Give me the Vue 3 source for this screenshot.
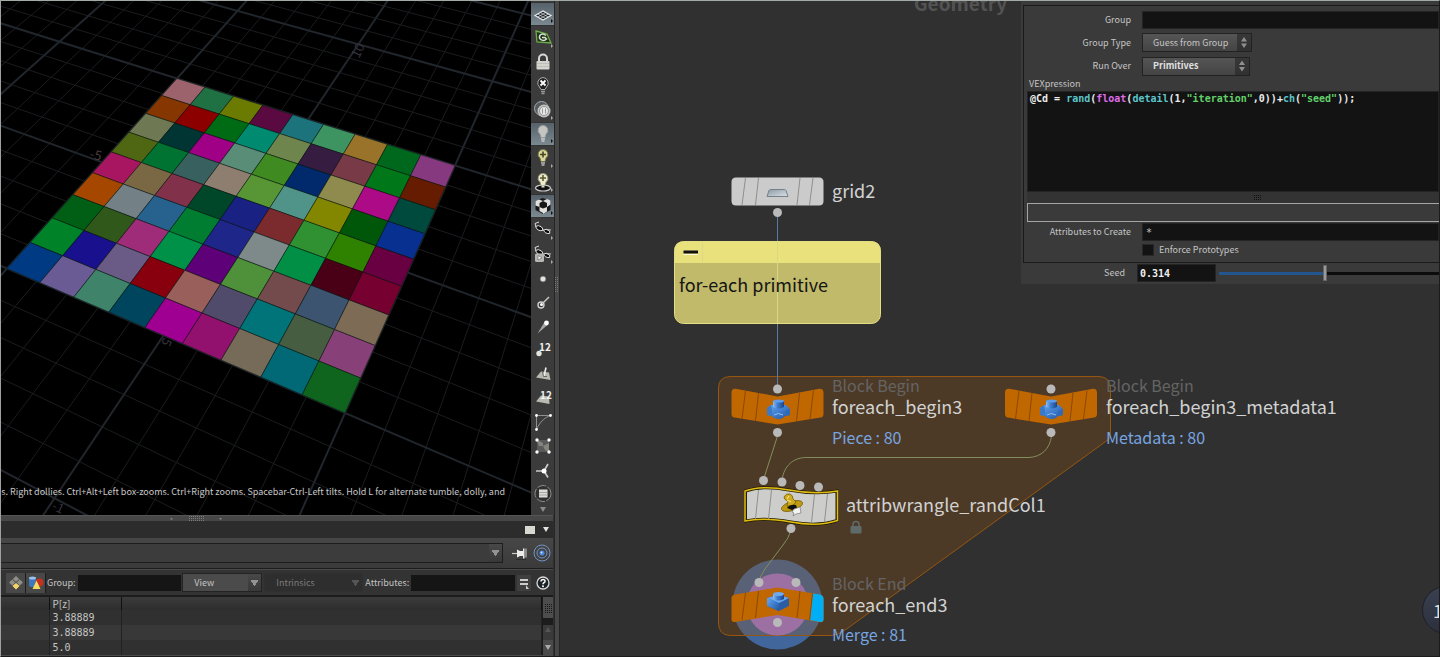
<script setup>
import { ref } from 'vue'

// Projective mapping of the unit square onto the tilted ground plane.
const A = [176, 77.5]
const B = [454, 164.5]
const C = [344, 412]
const D = [6, 267.5]
const sx = A[0] - B[0] + C[0] - D[0]
const sy = A[1] - B[1] + C[1] - D[1]
const ex = B[0] - C[0]
const ey = B[1] - C[1]
const fx = D[0] - C[0]
const fy = D[1] - C[1]
const det = ex * fy - fx * ey
const g = (sx * fy - fx * sy) / det
const h = (ex * sy - sx * ey) / det

function project(u, v) {
  const w = 1 + g * u + h * v
  const x = ((B[0] - A[0] + g * B[0]) * u + (D[0] - A[0] + h * D[0]) * v + A[0]) / w
  const y = ((B[1] - A[1] + g * B[1]) * u + (D[1] - A[1] + h * D[1]) * v + A[1]) / w
  return x.toFixed(1) + ' ' + y.toFixed(1)
}

const palette = [
  '9c636d 1f7043 6b7a00 5a0a41 1d737b 3e9460 9a732b 00681c 87397f',
  '863600 8c0000 006b15 008a70 6e864d 361c41 783a47 007819 661c00',
  '6e7853 003534 9f0086 5a8d78 408a22 002a6b 8f8a4d ac0a86 00493d',
  '4f6613 007332 38605f 8e7e70 589534 509389 838700 00570a 083090',
  'a81561 7a6844 82314b 00472a 192182 7b2b2d 2f9132 2f8100 690042',
  'a64700 738086 26628d 007d31 1e268a 7e898a 008f45 490017 76002f',
  '005f14 2f581a 9e2c78 009149 5e0077 4f903a 734b4c 3c546f 7d6b55',
  '008328 19108d 6a5b86 88000d 985f5b 504b6b 007479 465d42 884079',
  '003a82 6b5b94 3f836a 00455e 9f0092 92116e 766a58 006975 0f651e'
]
const cells = palette.flatMap((row, j) =>
  row.split(' ').map((color, i) => ({
    fill: '#' + color,
    d: `M${project(i / 9, j / 9)}L${project((i + 1) / 9, j / 9)}L${project((i + 1) / 9, (j + 1) / 9)}L${project(i / 9, (j + 1) / 9)}Z`
  }))
)
let thin = ''
let major = ''
for (let k = -20; k <= 30; k++) {
  const t = k / 10
  const d = `M${project(t, -2)}L${project(t, 2)}` + (k <= 20 ? `M${project(-2, t)}L${project(3, t)}` : '')
  if (k % 5 === 0) major += d
  else thin += d
}

const bulb = 'M11 2.500a4.800 4.800 0 0 0-3 8.600l1 3.400h4l1-3.400a4.800 4.800 0 0 0-3-8.600z'
const glasses = '<path d="M3 4.500l4-1.500M3 4.500l1 3" stroke="#ddd" fill="none"/><path d="M3.500 7.500q3-2 6 .5 2 2 1 3.500-5 1-7-4z" fill="#0d0d0d" stroke="#e8e8e8"/><path d="M11.500 11q3-1.500 5.500.5 1.500 1.500.5 3-4.500.5-6-3.500z" fill="#0d0d0d" stroke="#e8e8e8"/><path d="M10 10l2 1.500M14 10.500l5 .5" stroke="#ccc"/>'
const tools = [
  { name: 'Reference grid', on: true, more: true, art: '<path d="M3 12.500L11 8l8 4.500-8 4.500z" fill="#20262a" stroke="#e4e8ea" stroke-width="1.200"/><path d="M5.700 11l8 4.500M8.300 9.500l8 4.500M5.700 14l8-4.500M8.300 15.500l8-4.500" stroke="#d4d8da" stroke-width=".7"/>' },
  { name: 'Construction plane', more: true, art: '<path d="M4 4l11 3 4 9-14-1z" fill="#20301a" stroke="#6fae4e" stroke-width="1.300"/><path d="M14 8.500c-4-3-7-1-6.500 2.500 1 3 5 3 7 1l-1.500-1.500H10" stroke="#d8e2d2" stroke-width="1.500" fill="none"/>' },
  { name: 'Lock camera', art: '<path d="M7 11V7.500a4 4 0 0 1 8 0V11" stroke="#d8d8d2" stroke-width="2" fill="none"/><rect x="4.500" y="10" width="13" height="8.500" rx="1" fill="#d4d4ce"/><path d="M5 12.500h12M5 15.500h12" stroke="#b5b5b0" stroke-width=".7"/>' },
  { name: 'Disable lighting', art: '<path d="M11 2.500a5.500 5.500 0 0 0-3.500 9.500l1.500 2.500h4l1.500-2.500A5.500 5.500 0 0 0 11 2.500z" fill="#222" stroke="#a9adac"/><path d="M8.500 5.500l5 5M13.500 5.500l-5 5" stroke="#fff" stroke-width="1.800"/><path d="M9 16.500h4M9.500 18.500h3" stroke="#999" stroke-width="1.300"/>' },
  { name: 'Headlight', more: true, art: '<circle cx="9.500" cy="9.500" r="7" fill="#55595b" stroke="#a8acb0"/><circle cx="12" cy="12" r="6.500" fill="#c2c4c2"/><circle cx="12" cy="12" r="4.500" fill="#e6e6e6" stroke="#8f9394"/><path d="M10.500 9.500v5M13.500 9.500v5" stroke="#999"/>' },
  { name: 'Normal lighting', on: true, more: true, art: `<path d="${bulb}" fill="#c4c5c0" stroke="#9a9d9c"/><path d="M9 16h4M9.500 18h3" stroke="#c9cccc" stroke-width="1.400"/>` },
  { name: 'High quality lighting', more: true, art: `<path d="${bulb}" fill="#d8d996" stroke="#77784f"/><path d="M11 4.500v6M8 7.500h6" stroke="#44442a" stroke-width="1.600"/><path d="M9 16h4M9.500 18h3" stroke="#bbb" stroke-width="1.400"/>` },
  { name: 'Lighting with shadows', more: true, art: `<ellipse cx="11" cy="17" rx="7.500" ry="3" fill="#111" stroke="#cfcfcf" stroke-width="1.200"/><path d="${bulb}" fill="#ecebca" stroke="#99997c"/><path d="M11 4v6M8 7h6" stroke="#5a5a35" stroke-width="1.600"/><path d="M9.500 15.500h3" stroke="#ddd" stroke-width="2"/>` },
  { name: 'Materials', on: true, more: true, art: '<path d="M3.500 6l7-3 8 2.500V15L11 19l-7.500-4z" fill="#181818"/><path d="M3.500 6L7 4.500 11 6 7.500 8zM11 6l4-2 3.500 1.500L15 8zM3.500 6l4 2v4l-4-1.500zM7.500 12l3.500 1.500V18l-3.500-2zM15 8l3.500-2.500v4L15 12zM11 13.500l4-1.500v4.500L11 19z" fill="#dfe0de"/>' },
  { name: 'Display options', more: true, art: glasses },
  { name: 'Snapshot', more: true, art: glasses + '<rect x="3" y="10.500" width="9" height="8.500" rx="1.500" fill="#b6b6b2"/><path d="M6 12.500v4.500l4-2.300z" fill="#fff" stroke="#666" stroke-width=".7"/>' },
  { name: 'Points', art: '<circle cx="11" cy="12" r="2.800" fill="#e5e5e0" stroke="#777" stroke-width=".6"/>' },
  { name: 'Point normals', art: '<path d="M9 14l8-8" stroke="#c3c3be" stroke-width="1.600"/><circle cx="9" cy="14" r="3" fill="#333" stroke="#d0d0cc" stroke-width="1.400"/><circle cx="9.500" cy="13.500" r="1.500" fill="#fff"/>' },
  { name: 'Point trails', art: '<path d="M5.500 18.500l7-11.500 3 3z" fill="#a5a5a2"/><circle cx="14.500" cy="8" r="2.400" fill="#fff"/>' },
  { name: 'Point numbers', art: '<text x="7" y="12" class="num">12</text><circle cx="7" cy="14.500" r="2.700" fill="#e3e3de"/>' },
  { name: 'Primitive normals', art: '<path d="M4 14.500l5-6 8 1 1.500 7.500z" fill="#b9b9b4"/><path d="M12 13l2-8.500" stroke="#eee" stroke-width="1.600"/><path d="M10.500 9l1 4.500h3.500" stroke="#666" fill="none"/>' },
  { name: 'Primitive numbers', art: '<path d="M4 14.500l5-6 8 1 .5 7.500z" fill="#b9b9b4"/><text x="8" y="12" class="num">12</text>' },
  { name: 'Primitive hulls', art: '<path d="M4.500 4.500v14M4.500 4.500h14M4.500 18.500C7 12.500 12 6.500 18.500 4.500" stroke="#8f8f8c" fill="none"/><circle cx="4.500" cy="4.500" r="1.400" fill="#fff"/><circle cx="18.500" cy="4.500" r="1.400" fill="#fff"/><circle cx="4.500" cy="18.500" r="1.400" fill="#fff"/>' },
  { name: 'Profiles', art: '<path d="M5 5h12v12H5z" fill="#5a5a5a"/><path d="M5 5l6 3v3H7zM11 11l6-3v9l-4-2z" fill="#85857f"/><g fill="#fff"><circle cx="5" cy="5" r="1.700"/><circle cx="17" cy="5" r="1.700"/><circle cx="5" cy="17" r="1.700"/><circle cx="17" cy="17" r="1.700"/></g>' },
  { name: 'Vector axes', art: '<path d="M12 12H4M12 12l4-7M12 12l4 6.500" stroke="#c9c9c5" stroke-width="1.700"/><circle cx="12" cy="12" r="2.500" fill="#fff"/>' },
  { name: 'Visualizers', art: '<circle cx="11" cy="11.500" r="8" fill="#303030" stroke="#8d8d8a" stroke-dasharray="9 1.500"/><path d="M7 7.500h8.500v8H7z" fill="#ddddd8"/><path d="M7 10.500h8.500M7 13h8.500" stroke="#999" stroke-width=".8"/>' }
]

const rows = ['3.88889', '3.88889', '5.0']
const code = '@Cd = rand(float(detail(1,"iteration",0))+ch("seed"));'
const tokens = [
  ['@Cd = ', 'w'], ['rand', 'f'], ['(', 'w'], ['float', 't'], ['(', 'w'], ['detail', 'f'], ['(1,', 'w'],
  ['"iteration"', 's'], [',0))+', 'w'], ['ch', 'f'], ['(', 'w'], ['"seed"', 's'], ['));', 'w']
]
const vex = ref(code)
const seed = ref('0.314')

const ports = [
  [777.5, 212.5], [777.5, 389], [777.5, 432.5], [1051, 389], [1051, 432.5], [763.5, 480.5], [782, 482],
  [800, 485.5], [818.5, 487], [791, 528.5], [759, 582.5], [796, 582.5], [777.5, 622.5]
]
</script>

<template>
  <div class="desktop">
    <div class="left">
      <section class="scene">
        <div class="view">
          <svg class="world" role="img" aria-label="Perspective view of a coloured grid">
            <path :d="thin" class="thin" />
            <path :d="major" class="major" />
            <g class="axis">
              <text transform="translate(88 157) rotate(14)" class="red">-5</text>
              <text transform="translate(163 336) rotate(115)">5</text>
              <text transform="translate(358 58) rotate(-65)">10</text>
              <text transform="translate(50 508) rotate(25)">-1</text>
            </g>
            <path v-for="(c, i) in cells" :key="i" :d="c.d" :fill="c.fill" class="cell" />
          </svg>
          <p class="hint">ms. Right dollies. Ctrl+Alt+Left box-zooms. Ctrl+Right zooms. Spacebar-Ctrl-Left tilts. Hold L for alternate tumble, dolly, and</p>
        </div>
        <div class="tools">
          <button v-for="t in tools" :key="t.name" type="button" class="tool" :class="{ on: t.on }" :aria-label="t.name">
            <svg viewBox="0 0 22 22" v-html="t.art"></svg>
            <i v-if="t.more" class="more"></i>
          </button>
          <button type="button" class="scroll-more" aria-label="More display options">
            <svg viewBox="0 0 8 6"><path d="M1 0h6L4 5z" fill="#8a8a8a" /></svg>
          </button>
        </div>
      </section>

      <section class="sheet">
        <div class="hsplit">
          <svg viewBox="0 0 54 6">
            <path d="M1 3.500l1.500-2 1.500 2zM50 2h3l-1.500 2z" fill="#888" />
            <path d="M20 .500h16M20 2.500h16M20 4.500h16" stroke="#7a7a7a" stroke-dasharray="1 1" />
          </svg>
        </div>
        <div class="tabs">
          <button type="button" aria-label="Maximize pane"><svg viewBox="0 0 10 9"><path d="M0 1h10v8H0z" fill="#d8d8d2" /></svg></button>
          <button type="button" aria-label="Pane menu" class="caret"><svg viewBox="0 0 6 6"><path d="M0 0h6L3 5z" fill="#e4e4de" /></svg></button>
        </div>
        <div class="pathbar">
          <select class="path" aria-label="Node path"><option></option></select>
          <button type="button" aria-label="Pin">
            <svg viewBox="0 0 18 14"><path d="M1 7.500h6" stroke="#ccc" stroke-width="1.200" /><path d="M6 3.500l3 1.500h3V2.500h1.500v10H12V10H9l-3 1.500z" fill="#ecece8" /><path d="M15 2.500v9" stroke="#bbb" stroke-width="1.200" /><path d="M5 13.500h10" stroke="#222" stroke-width=".6" /></svg>
          </button>
          <button type="button" aria-label="Link" class="link">
            <svg viewBox="0 0 18 18"><g fill="none" stroke="#7394c4"><circle cx="9" cy="9" r="8" /><circle cx="9" cy="9" r="5" /></g><circle cx="9" cy="9" r="2.600" fill="#4b86d8" /><circle cx="8.500" cy="8.500" r="1" fill="#cfe0fb" /></svg>
          </button>
        </div>
        <div class="filters">
          <button type="button" class="sq" aria-label="Points">
            <svg viewBox="0 0 16 16"><path d="M8 1l7 6.500L8 14 1 7.500z" fill="#8f8f88" /><path d="M4.500 4.300l7 6.500M11.500 4.300l-7 6.500" stroke="#3d3d3d" /><path d="M8 8l3.500 3L8 14.500 4.500 11z" fill="#f7d466" /></svg>
          </button>
          <button type="button" class="sq" aria-label="Primitives">
            <svg viewBox="0 0 16 16"><rect x="1" y="2" width="7" height="10" rx="2" fill="#3f77bd" /><ellipse cx="4.500" cy="3" rx="3.500" ry="1.500" fill="#9cc0ea" /><circle cx="11.500" cy="7.500" r="4" fill="#c6301e" /><path d="M8.500 5.500l4 8.500H4.500z" fill="#f3dc62" /></svg>
          </button>
          <label for="grp">Group:</label>
          <input id="grp" type="text" />
          <select class="dd" aria-label="View"><option>View</option></select>
          <select class="dd off" aria-label="Intrinsics" disabled><option>Intrinsics</option></select>
          <label for="attr">Attributes:</label>
          <input id="attr" type="text" />
          <button type="button" class="mini" aria-label="Attribute list">
            <svg viewBox="0 0 12 12"><path d="M2 3h8M2 7h8" stroke="#ccc" stroke-width="2" /><path d="M8 8v4h3z" fill="#ccc" /></svg>
          </button>
          <button type="button" class="help" aria-label="Help">
            <svg viewBox="0 0 14 14"><circle cx="7" cy="7" r="6" fill="#1b2228" stroke="#d8d8d8" stroke-width="1.300" /><path d="M5 5.500c0-3 4.500-2.500 4 0-.300 1.200-2 1.200-2 2.700" stroke="#fff" stroke-width="1.500" fill="none" /><circle cx="7" cy="10.300" r="1" fill="#fff" /></svg>
          </button>
        </div>
        <div class="data">
          <table>
            <thead><tr><th class="c1"></th><th class="c2">P[z]</th><th></th></tr></thead>
            <tbody>
              <tr v-for="(r, i) in rows" :key="i"><td></td><td>{{ r }}</td><td></td></tr>
            </tbody>
          </table>
          <div class="bar">
            <svg class="grip" viewBox="0 0 8 10"><path d="M1.500 1v9M3.500 1v9M5.500 1v9M7.500 1v9" stroke="#151515" stroke-dasharray="1 1" /></svg>
            <svg viewBox="0 0 6 5"><path d="M0 5h6L3 0z" fill="#555" /></svg>
            <svg viewBox="0 0 6 5"><path d="M0 0h6L3 5z" fill="#aaa" /></svg>
          </div>
        </div>
      </section>
    </div>

    <div class="vsplit">
      <svg viewBox="0 0 4 20"><path d="M.500 0v16M2.500 0v16" stroke="#777" stroke-dasharray="1 1" /></svg>
    </div>

    <section class="network">
      <svg class="graph" role="group" aria-label="Network editor">
        <defs>
          <linearGradient id="brickFront" x1="0" y1="0" x2="1" y2="1"><stop offset="0" stop-color="#6ba5ec" /><stop offset=".5" stop-color="#3f7fd0" /><stop offset="1" stop-color="#245397" /></linearGradient>
          <linearGradient id="stud" x1="0" y1="0" x2="1" y2="0"><stop offset="0" stop-color="#8fbcf3" /><stop offset=".4" stop-color="#3f7fd0" /><stop offset="1" stop-color="#1c458a" /></linearGradient>
          <linearGradient id="plate" x1="0" y1="0" x2="1" y2="1"><stop offset="0" stop-color="#8b98a3" /><stop offset="1" stop-color="#dce2e6" /></linearGradient>
          <g id="bent">
            <path d="M-46-11.500q0-4 4-3.800L0-7.500l42-7.800q4-.200 4 3.800V10q0 3-3 3.600L0 20.500-43 13.600q-3-.600-3-3.600z" fill="#c16700" />
            <path d="M-32-13.500l-3.500 28.500M-19-11l-3 28M22-11l-3 28M36-13.500l-3.500 28.500" stroke="#8a4a06" />
          </g>
          <g id="brick">
            <path d="M-11-1l4-3H8l4 4v6L7 7 5 9q-4 2-9 0l-2-2-5-1z" fill="url(#brickFront)" />
            <path d="M-11-1l4-3 1 6v5l-5-1z" fill="#3a78c8" />
            <path d="M7 2l5-2v6L7 7z" fill="#2f69b8" />
            <path d="M-4 6q4-3 9 0" fill="none" stroke="#8fbdf5" />
            <path d="M-5-8H6v6q-5 3-11 0z" fill="url(#stud)" />
            <ellipse cx=".5" cy="-8" rx="5.500" ry="1.500" fill="#5f9be6" />
          </g>
          <g id="brickEnd">
            <path d="M-11-4L0-7l11 3v8L1 9-11 4z" fill="#2a5da6" />
            <path d="M-11-4L0-7l11 3L1 1z" fill="#6aa6ee" />
            <path d="M-11-4L1 1v8l-12-5z" fill="url(#brickFront)" />
            <path d="M-5-8H6v5Q.5 0-5-3z" fill="url(#stud)" />
            <ellipse cx=".5" cy="-8" rx="5.500" ry="2" fill="#6fa8ef" />
          </g>
        </defs>
        <g transform="translate(-560 -1)">
          <text x="914" y="11" class="title">Geometry</text>
          <circle cx="777.500" cy="604.500" r="45" fill="#41669c" />
          <path class="block" d="M730 376.500H1099Q1110.500 377 1110.500 389V438L848 628Q838 635.500 830 635.500H730Q718.500 635 718.500 623V388Q718.500 377 730 376.500Z" />
          <circle cx="777.500" cy="604.500" r="31" fill="#9c70a3" />

          <path class="wire dep" d="M777.500 212V388" />
          <g class="wire">
            <path d="M777.500 436L764 478" />
            <path d="M1051.500 436C1050 449 1041 457 1029 457.500H808C793 457 784 466 782 480" />
            <path d="M791 530Q789 538 783 545L765 569Q760 576 759 582" />
          </g>

          <path d="M736 177.500H819Q823.500 177.500 823.500 182V201Q823.500 205.500 819 205.500H736Q731.500 205.500 731.500 201V182Q731.500 177.500 736 177.500Z" fill="#cbcbcb" />
          <path d="M745.500 178l-3.500 27M758.500 178l-3 27M800 178l-3 27M813 178l-3.500 27" stroke="#8f8f8f" />
          <path d="M770.500 189.500h14q1 0 1.500 1l2 6h-21l2-6q.500-1 1.500-1z" fill="url(#plate)" stroke="#74818b" />
          <text x="832" y="198" class="name">grid2</text>

          <rect x="674.500" y="241.500" width="206" height="82" rx="9" fill="#c0ba6a" />
          <path d="M674.500 263V250.500q0-9 9-9h188q9 0 9 9V263z" fill="#e9e17c" />
          <rect x="674.500" y="241.500" width="206" height="82" rx="9" fill="none" stroke="#e4dd82" />
          <path d="M702.500 243v19M777.500 242v81" stroke="#dbd68a" />
          <path d="M683.500 254.500h14.500" stroke="#fffbd8" /><path d="M683.500 252h14.500" stroke="#111" stroke-width="3" />
          <text x="679" y="292" class="note">for-each primitive</text>

          <use href="#bent" x="777.500" y="404" /><use href="#brick" x="778" y="409" />
          <use href="#bent" x="1051" y="404" /><use href="#brick" x="1051" y="409" />

          <path d="M745.500 491Q762 485 789 490T837 491V520.500Q818 527 791 522T745.500 521Z" fill="#cdcdcb" stroke="#231d05" stroke-width="3" />
          <path d="M745 491Q762 485 789 490T837.500 491V520.500Q818 527 791 522T745 521Z" fill="none" stroke="#e0bd10" stroke-width="1.500" />
          <path d="M758.500 490l-3 29M771.500 490l-3 29M814.500 494l-3 29M827.500 494l-3 28" stroke="#8f8f8f" />
          <ellipse cx="792" cy="506" rx="11" ry="4.500" transform="rotate(-18 792 506)" fill="#bf9a12" stroke="#75600c" stroke-width=".8" />
          <path d="M784 497q2-4 6-3 3 1 3 5l3 3q-3 5-9 4l1-5q-4-1-4-4z" fill="#ceab1c" stroke="#75600c" stroke-width=".8" />
          <path d="M787 500l4 2M789 496l-2 3" stroke="#f4e07a" stroke-width="1.200" />
          <path d="M787 508q3-4 9-3l1 3-5 2z" fill="#111" />
          <path d="M794 509l6-2 1 6-5 1-3 2 1-3-2-1z" fill="#f4f4f2" stroke="#777" stroke-width=".7" />

          <path d="M735 594.500L777.500 587.500 820 594.500Q823.500 595.500 823.500 599V619Q823.500 623 819.500 622L777.500 615 735 622Q731.500 622.500 731.500 619V598Q731.500 595 735 594.500Z" fill="#c16700" />
          <path d="M813 593.500l7 1q3.500 1 3.500 4.500v20q0 3.500-3.500 3l-10-2z" fill="#00aef5" />
          <path d="M745.500 593l-3.500 27M758.500 591l-3 27M800 591l-3 27M812.500 593.500l-3 27" stroke="#8a4a06" />
          <use href="#brickEnd" x="778" y="602" />

          <g fill="#b9b9b9">
            <circle v-for="p in ports" :key="p.join()" :cx="p[0]" :cy="p[1]" r="4.500" />
          </g>

          <g fill="#5f6a6a"><rect x="850.500" y="526" width="11" height="7.500" rx="1" /><path d="M853 527v-2.500a3 3 0 0 1 6 0V527" fill="none" stroke="#5f6a6a" stroke-width="1.500" /></g>

          <text x="832" y="392" class="kind">Block Begin</text>
          <text x="832" y="414" class="name">foreach_begin3</text>
          <text x="832" y="444" class="info">Piece : 80</text>
          <text x="1106" y="392" class="kind">Block Begin</text>
          <text x="1106" y="414" class="name">foreach_begin3_metadata1</text>
          <text x="1106" y="444" class="info">Metadata : 80</text>
          <text x="846" y="512" class="name">attribwrangle_randCol1</text>
          <text x="832" y="590" class="kind">Block End</text>
          <text x="832" y="612" class="name">foreach_end3</text>
          <text x="832" y="641" class="info">Merge : 81</text>
        </g>
      </svg>

      <button type="button" class="badge">1</button>

      <form class="params" @submit.prevent>
        <div class="frame">
          <label for="p-group" class="lab">Group</label>
          <input id="p-group" type="text" class="field" />
          <label for="p-type" class="lab">Group Type</label>
          <span class="spin"><select id="p-type"><option>Guess from Group</option></select></span>
          <label for="p-run" class="lab">Run Over</label>
          <span class="spin strong"><select id="p-run"><option>Primitives</option></select></span>
          <div class="vex">
            <label for="p-vex">VEXpression</label>
            <div class="editor">
              <pre aria-hidden="true"><span v-for="(t, i) in tokens" :key="i" :class="t[1]">{{ t[0] }}</span></pre>
              <textarea id="p-vex" v-model="vex" spellcheck="false"></textarea>
            </div>
            <div class="drag"><svg viewBox="0 0 8 6"><path d="M0 .500h8M0 2.500h8M0 4.500h8" stroke="#111" stroke-dasharray="1 1" stroke-width="1.200" /></svg></div>
            <div class="msg"></div>
          </div>
          <label for="p-attr" class="lab">Attributes to Create</label>
          <input id="p-attr" type="text" class="field mono" value="*" />
          <label class="check"><input type="checkbox" />Enforce Prototypes</label>
        </div>
        <div class="seed">
          <label for="p-seed">Seed</label>
          <input id="p-seed" v-model="seed" type="text" />
          <input v-model="seed" type="range" min="0" max="1" step="0.001" aria-label="Seed slider" />
        </div>
      </form>
    </section>
  </div>
</template>

<style>
html, body { margin: 0; background: #303030; overflow: hidden; }
</style>

<style scoped>
* { box-sizing: border-box; }
.desktop {
  display: flex; height: 100vh; color: #c4c4c4;
  border: 1px solid #1b1b1b; border-top-color: #a4aaa6; border-left-color: #a0a0a0;
  font: 9px/14px "Noto Sans CJK SC", "Open Sans", sans-serif;
  overflow: hidden;
}
button { padding: 0; border: 0; background: none; color: inherit; font: inherit; display: flex; align-items: center; justify-content: center; }
input, select, textarea { font: inherit; color: inherit; border: 0; margin: 0; padding: 0; outline: 0; border-radius: 0; }
svg { display: block; }
.left { flex: 0 0 553px; display: flex; flex-direction: column; min-width: 0; background: #303030; }
.scene { flex: 1; display: flex; min-height: 0; }
.view { flex: 1; position: relative; background: #000; overflow: hidden; min-width: 0; }
.world { width: 100%; height: 100%; }
.thin { stroke: #1a1c1f; fill: none; }
.major { stroke: #20262c; fill: none; stroke-width: 2; }
.cell { stroke: #0a1510; stroke-opacity: .5; stroke-width: 1; }
.axis { fill: #35323f; font-size: 13px; }
.axis .red { fill: #4b3a3c; }
.hint { position: absolute; right: 26px; bottom: 16px; margin: 0; white-space: nowrap; color: #c8c8c8; }
.tools { width: 23px; padding-top: 1px; background: #3b3b3b; display: flex; flex-direction: column; overflow: hidden; }
.tool { flex: 0 0 24px; position: relative; }
.tool:nth-last-child(2) { flex-basis: 22px; }
.tool.on { background: linear-gradient(#56616a, #7b8990); border: 1px solid #333; border-width: 1px 0; }
.tool svg { width: 22px; height: 22px; }
.tool :deep(.num) { font: bold 10px "Noto Sans CJK SC", sans-serif; fill: #f0f0ec; }
.more { position: absolute; right: 1px; bottom: 2px; border: 2px solid transparent; border-left-color: #aaa; border-right: 0; }
.tool.on .more { border-left-color: #111; }
.scroll-more { flex: 1; }
.scroll-more svg { width: 8px; height: 6px; }

.sheet { flex: 0 0 140px; display: flex; flex-direction: column; background: #303030; margin-right: 1px; }
.hsplit { height: 6px; background: #474747; display: flex; padding-left: 168px; border-top: 1px solid #555; }
.hsplit svg { width: 54px; height: 6px; }
.tabs { height: 17px; background: #2c2c2c; display: flex; justify-content: flex-end; align-items: center; gap: 8px; padding-right: 4px; }
.tabs svg { width: 10px; height: 9px; }
.tabs .caret svg { width: 6px; height: 6px; }
.pathbar { height: 31px; background: linear-gradient(#474747, #3a3a3a); display: flex; align-items: center; gap: 4px; padding-right: 2px; border-bottom: 1px solid #1c1c1c; }
.path { flex: 1; height: 20px; margin-right: 4px; border: 1px solid #1d1d1d; border-left: 0; }
.pathbar button svg { width: 18px; height: 16px; }
.pathbar .link svg { width: 18px; height: 18px; }
.path, .dd {
  appearance: none;
  background: conic-gradient(from -34deg at 50% 100%, #929292 68deg, transparent 0) right 3px center / 7px 6px no-repeat, linear-gradient(#484848, #383838) right / 13px 100% no-repeat, #3c3c3c;
}
.filters { height: 28px; background: #333; border-bottom: 2px solid #1c1c1c; border-top: 1px solid #4a4a4a; display: flex; align-items: center; padding-left: 5px; padding-right: 3px; }
.sq { width: 20px; height: 20px; background: #484848; border-right: 1px solid #1c1c1c; }
.sq svg { width: 16px; height: 16px; }
.filters label { flex: none; margin: 0 2px 0 1px; }
.filters input { flex: 1; min-width: 0; height: 16px; background: #151515; }
.dd { flex: none; width: 80px; height: 19px; margin: 0 2px 0 1px; padding-left: 11px; background-color: #4b4b4b; border: 1px solid #232323; }
.dd.off { width: 99px; margin: 0 1px 0 0; opacity: 1; color: #7b7b7b; background: conic-gradient(from -34deg at 50% 100%, #555 68deg, transparent 0) right 3px center / 7px 6px no-repeat, #2e2e2e; border-color: #303030; }
.mini { width: 14px; height: 16px; margin: 0 5px 0 2px; background: #3f3f3f; }
.mini svg { width: 12px; height: 12px; }
.help svg { width: 14px; height: 14px; }
.data { flex: 1; display: flex; border-bottom: 1px solid #4a4a4a; min-height: 0; }
table { flex: 1; border-collapse: collapse; table-layout: fixed; width: 0; align-self: flex-start; }
th, td { height: 15px; padding: 0 0 0 3px; line-height: 14px; text-align: left; font-weight: 400; border-right: 1px solid #222; }
th { background: linear-gradient(#3b3b3b, #2d2d2d); height: 13px; line-height: 12px; border-color: #111; font-size: 10px; }
td { font: 10px/14px "DejaVu Sans Mono", monospace; }
tbody tr:nth-child(even) { background: #383838; }
.c1 { width: 48px; }
.c2 { width: 72px; }
.bar { width: 11px; display: flex; flex-direction: column; align-items: center; justify-content: space-between; background: linear-gradient(#4d4d4d 0 21px, #1c1c1c 21px 28px, #3a3a3a 28px 43px, #4a4a4a 43px); padding: 6px 0 5px; border-left: 1px solid #1a1a1a; }
.bar svg { width: 6px; height: 5px; }
.bar .grip { width: 8px; height: 10px; }

.vsplit { flex: 0 0 6px; border-left: 1px solid #252525; border-right: 1px solid #252525; background: #474747; padding-top: 276px; }
.vsplit svg { width: 4px; height: 20px; }

.network { flex: 1; position: relative; background: #303030; overflow: hidden; min-width: 0; }
.graph { width: 100%; height: 100%; }
.title { font-size: 19px; font-weight: 700; fill: #535353; }
.name { font-size: 18px; fill: #d2d2d2; }
.note { font-size: 18px; fill: #151515; }
.kind { font-size: 16px; fill: #646464; }
.info { font-size: 16px; fill: #78a5e0; }
.block { fill: rgba(152, 85, 15, .27); stroke: #96560f; }
.wire { fill: none; stroke: #828f5c; }
.dep { stroke: #5b7ba6; }
.badge { position: absolute; right: -31px; bottom: 22px; width: 48px; height: 48px; border-radius: 50%; border: 1px solid #1d2029; background: linear-gradient(#3a4050, #2c303d); color: #e0e0e0; font-size: 18px; justify-content: flex-start; padding-left: 10px; }

.params { position: absolute; top: 0; right: 0; width: 418px; background: #3a3a3a; padding: 4px 0 1px 2px; overflow: hidden; }
.frame { border: 1px solid #1a1a1a; border-right: 0; padding: 5px 0 4px 3px; display: grid; grid-template-columns: 104px minmax(0, 1fr); grid-template-rows: 18px 25px 20px auto 18px 16px; column-gap: 11px; row-gap: 1px; align-items: center; }
.lab { text-align: right; }
.field { height: 18px; background: #131313; border: 1px solid #242424; padding-left: 3px; width: 100%; }
.mono { font: 10px/14px "DejaVu Sans Mono", monospace; }
.spin { position: relative; width: 110px; height: 19px; border: 1px solid #222; background: linear-gradient(#555, #444); display: flex; }
.spin.strong { width: 108px; font-weight: 700; color: #e0e0e0; }
.spin select { width: 100%; appearance: none; padding-left: 10px; background: linear-gradient(#383838, #303030) right / 14px 100% no-repeat; }
.spin::after { content: ""; position: absolute; right: 4px; top: 3px; width: 6px; height: 11px; background: #8f8f8f; clip-path: polygon(50% 0, 100% 42%, 0 42%, 0 58%, 100% 58%, 50% 100%, 0 58%, 0 42%); }
.vex { grid-column: 1 / -1; display: flex; flex-direction: column; }
.vex label { padding-left: 2px; }
.editor { position: relative; height: 101px; background: #131313; border: 1px solid #242424; font: bold 10px/14px "DejaVu Sans Mono", monospace; }
.editor pre, .editor textarea { margin: 0; padding: 0 0 0 2px; font: inherit; }
.editor textarea { position: absolute; inset: 0; width: 100%; height: 100%; background: transparent; color: transparent; caret-color: #fff; resize: none; white-space: pre; overflow: hidden; }
.w { color: #ececec; }
.f { color: #5cc4c9; }
.t { color: #dd6ce6; }
.s { color: #62d06a; }
.drag { height: 11px; background: #333; display: flex; align-items: center; padding-left: 227px; }
.drag svg { width: 8px; height: 6px; }
.msg { height: 19px; border: 1px solid #a5a5a5; border-right: 0; background: #3a3a3a; }
.check { grid-column: 2; display: flex; align-items: center; gap: 5px; }
.check input { appearance: none; width: 12px; height: 12px; background: #131313; border: 1px solid #272727; }
.seed { display: flex; align-items: center; height: 20px; }
.seed label { flex: 0 0 114px; padding-right: 12px; text-align: right; }
.seed input[type="text"] { flex: 0 0 79px; width: 79px; height: 18px; background: #131313; border: 1px solid #242424; padding-left: 2px; font: bold 10px/14px "DejaVu Sans Mono", monospace; color: #eee; }
.seed input[type="range"] { flex: 0 0 334px; appearance: none; height: 16px; margin-left: 3px; background: linear-gradient(90deg, #23558f 105px, #0c0c0c 0) center / 100% 3px no-repeat; }
.seed input[type="range"]::-webkit-slider-thumb { appearance: none; width: 4px; height: 16px; background: #9a9a9a; border: 1px solid #666; }
</style>
